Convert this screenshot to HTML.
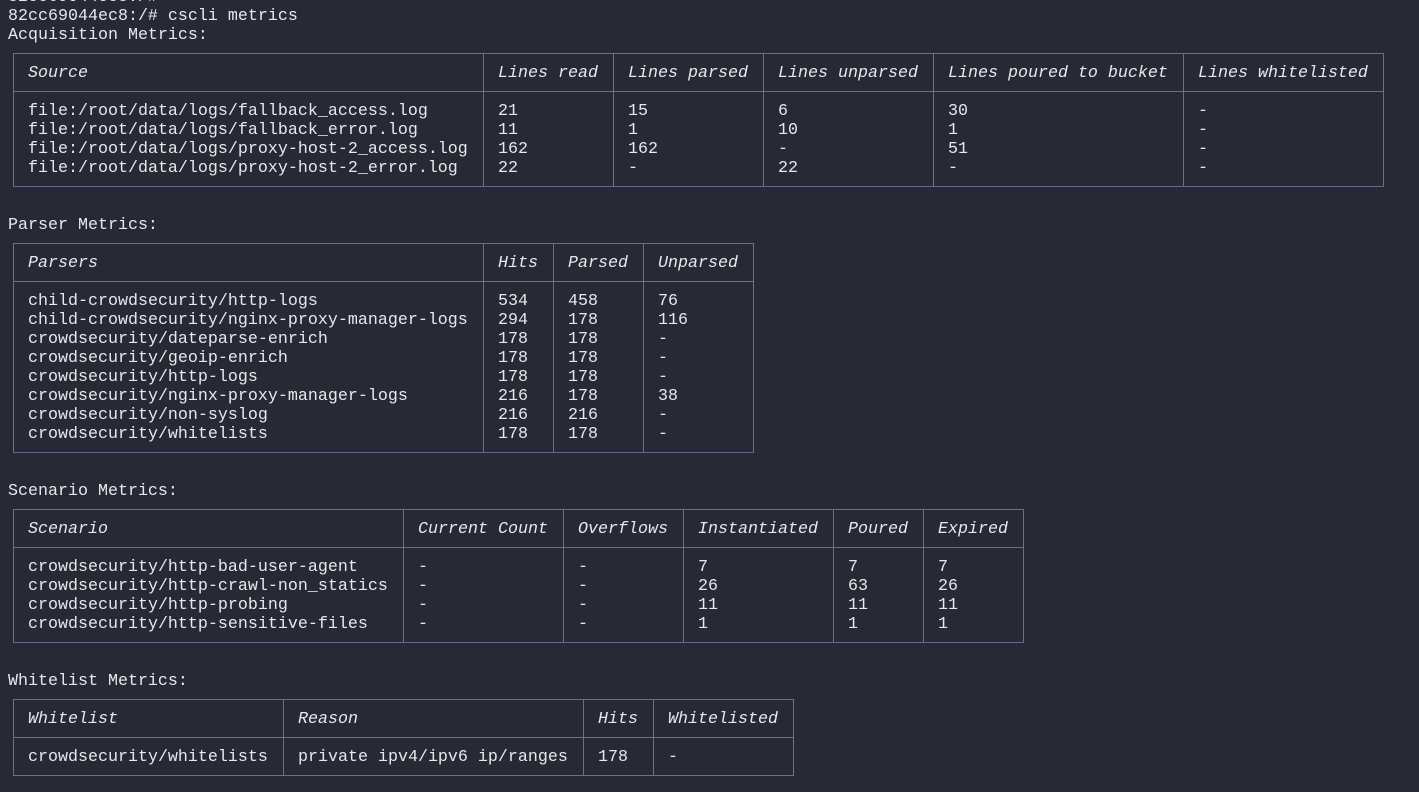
<!DOCTYPE html>
<html><head><meta charset="utf-8"><style>
html,body{margin:0;padding:0;background:#272935;width:1419px;height:792px;overflow:hidden;position:relative}
body{font-family:"Liberation Mono","DejaVu Sans Mono",monospace;font-size:16.67px;color:#e8e8ea}
.r{position:absolute;left:0;height:19px;line-height:19px;white-space:pre;width:1419px;margin-top:1px}
.r span{position:absolute;top:0}
.i{font-style:italic}
.h{position:absolute;height:1px;background:#6e7184}
.b{background:#5a67a0}
.v{position:absolute;width:1px;background:#6e7184}
</style></head><body>
<div class="r" style="top:-13.5px"><span style="left:8px">82cc69044ec8:/#</span></div>
<div class="r" style="top:5.5px"><span style="left:8px">82cc69044ec8:/# cscli metrics</span></div>
<div class="r" style="top:24.5px"><span style="left:8px">Acquisition Metrics:</span></div>

<div class="h" style="left:13px;top:53px;width:1370px"></div>
<div class="h" style="left:13px;top:91px;width:1370px"></div>
<div class="h b" style="left:13px;top:186px;width:1371px"></div>
<div class="v" style="left:13px;top:53px;height:133px"></div>
<div class="v" style="left:483px;top:53px;height:133px"></div>
<div class="v" style="left:613px;top:53px;height:133px"></div>
<div class="v" style="left:763px;top:53px;height:133px"></div>
<div class="v" style="left:933px;top:53px;height:133px"></div>
<div class="v" style="left:1183px;top:53px;height:133px"></div>
<div class="v" style="left:1383px;top:53px;height:133px"></div>
<div class="r i" style="top:62.5px"><span style="left:28px">Source</span><span style="left:498px">Lines read</span><span style="left:628px">Lines parsed</span><span style="left:778px">Lines unparsed</span><span style="left:948px">Lines poured to bucket</span><span style="left:1198px">Lines whitelisted</span></div>
<div class="r" style="top:100.5px"><span style="left:28px">file:/root/data/logs/fallback_access.log</span><span style="left:498px">21</span><span style="left:628px">15</span><span style="left:778px">6</span><span style="left:948px">30</span><span style="left:1198px">-</span></div>
<div class="r" style="top:119.5px"><span style="left:28px">file:/root/data/logs/fallback_error.log</span><span style="left:498px">11</span><span style="left:628px">1</span><span style="left:778px">10</span><span style="left:948px">1</span><span style="left:1198px">-</span></div>
<div class="r" style="top:138.5px"><span style="left:28px">file:/root/data/logs/proxy-host-2_access.log</span><span style="left:498px">162</span><span style="left:628px">162</span><span style="left:778px">-</span><span style="left:948px">51</span><span style="left:1198px">-</span></div>
<div class="r" style="top:157.5px"><span style="left:28px">file:/root/data/logs/proxy-host-2_error.log</span><span style="left:498px">22</span><span style="left:628px">-</span><span style="left:778px">22</span><span style="left:948px">-</span><span style="left:1198px">-</span></div>

<div class="r" style="top:214.5px"><span style="left:8px">Parser Metrics:</span></div>
<div class="h" style="left:13px;top:243px;width:740px"></div>
<div class="h" style="left:13px;top:281px;width:740px"></div>
<div class="h b" style="left:13px;top:452px;width:741px"></div>
<div class="v" style="left:13px;top:243px;height:209px"></div>
<div class="v" style="left:483px;top:243px;height:209px"></div>
<div class="v" style="left:553px;top:243px;height:209px"></div>
<div class="v" style="left:643px;top:243px;height:209px"></div>
<div class="v" style="left:753px;top:243px;height:209px"></div>
<div class="r i" style="top:252.5px"><span style="left:28px">Parsers</span><span style="left:498px">Hits</span><span style="left:568px">Parsed</span><span style="left:658px">Unparsed</span></div>
<div class="r" style="top:290.5px"><span style="left:28px">child-crowdsecurity/http-logs</span><span style="left:498px">534</span><span style="left:568px">458</span><span style="left:658px">76</span></div>
<div class="r" style="top:309.5px"><span style="left:28px">child-crowdsecurity/nginx-proxy-manager-logs</span><span style="left:498px">294</span><span style="left:568px">178</span><span style="left:658px">116</span></div>
<div class="r" style="top:328.5px"><span style="left:28px">crowdsecurity/dateparse-enrich</span><span style="left:498px">178</span><span style="left:568px">178</span><span style="left:658px">-</span></div>
<div class="r" style="top:347.5px"><span style="left:28px">crowdsecurity/geoip-enrich</span><span style="left:498px">178</span><span style="left:568px">178</span><span style="left:658px">-</span></div>
<div class="r" style="top:366.5px"><span style="left:28px">crowdsecurity/http-logs</span><span style="left:498px">178</span><span style="left:568px">178</span><span style="left:658px">-</span></div>
<div class="r" style="top:385.5px"><span style="left:28px">crowdsecurity/nginx-proxy-manager-logs</span><span style="left:498px">216</span><span style="left:568px">178</span><span style="left:658px">38</span></div>
<div class="r" style="top:404.5px"><span style="left:28px">crowdsecurity/non-syslog</span><span style="left:498px">216</span><span style="left:568px">216</span><span style="left:658px">-</span></div>
<div class="r" style="top:423.5px"><span style="left:28px">crowdsecurity/whitelists</span><span style="left:498px">178</span><span style="left:568px">178</span><span style="left:658px">-</span></div>

<div class="r" style="top:480.5px"><span style="left:8px">Scenario Metrics:</span></div>
<div class="h" style="left:13px;top:509px;width:1010px"></div>
<div class="h" style="left:13px;top:547px;width:1010px"></div>
<div class="h b" style="left:13px;top:642px;width:1011px"></div>
<div class="v" style="left:13px;top:509px;height:133px"></div>
<div class="v" style="left:403px;top:509px;height:133px"></div>
<div class="v" style="left:563px;top:509px;height:133px"></div>
<div class="v" style="left:683px;top:509px;height:133px"></div>
<div class="v" style="left:833px;top:509px;height:133px"></div>
<div class="v" style="left:923px;top:509px;height:133px"></div>
<div class="v" style="left:1023px;top:509px;height:133px"></div>
<div class="r i" style="top:518.5px"><span style="left:28px">Scenario</span><span style="left:418px">Current Count</span><span style="left:578px">Overflows</span><span style="left:698px">Instantiated</span><span style="left:848px">Poured</span><span style="left:938px">Expired</span></div>
<div class="r" style="top:556.5px"><span style="left:28px">crowdsecurity/http-bad-user-agent</span><span style="left:418px">-</span><span style="left:578px">-</span><span style="left:698px">7</span><span style="left:848px">7</span><span style="left:938px">7</span></div>
<div class="r" style="top:575.5px"><span style="left:28px">crowdsecurity/http-crawl-non_statics</span><span style="left:418px">-</span><span style="left:578px">-</span><span style="left:698px">26</span><span style="left:848px">63</span><span style="left:938px">26</span></div>
<div class="r" style="top:594.5px"><span style="left:28px">crowdsecurity/http-probing</span><span style="left:418px">-</span><span style="left:578px">-</span><span style="left:698px">11</span><span style="left:848px">11</span><span style="left:938px">11</span></div>
<div class="r" style="top:613.5px"><span style="left:28px">crowdsecurity/http-sensitive-files</span><span style="left:418px">-</span><span style="left:578px">-</span><span style="left:698px">1</span><span style="left:848px">1</span><span style="left:938px">1</span></div>

<div class="r" style="top:670.5px"><span style="left:8px">Whitelist Metrics:</span></div>
<div class="h" style="left:13px;top:699px;width:780px"></div>
<div class="h" style="left:13px;top:737px;width:780px"></div>
<div class="h" style="left:13px;top:775px;width:781px"></div>
<div class="v" style="left:13px;top:699px;height:76px"></div>
<div class="v" style="left:283px;top:699px;height:76px"></div>
<div class="v" style="left:583px;top:699px;height:76px"></div>
<div class="v" style="left:653px;top:699px;height:76px"></div>
<div class="v" style="left:793px;top:699px;height:76px"></div>
<div class="r i" style="top:708.5px"><span style="left:28px">Whitelist</span><span style="left:298px">Reason</span><span style="left:598px">Hits</span><span style="left:668px">Whitelisted</span></div>
<div class="r" style="top:746.5px"><span style="left:28px">crowdsecurity/whitelists</span><span style="left:298px">private ipv4/ipv6 ip/ranges</span><span style="left:598px">178</span><span style="left:668px">-</span></div>
</body></html>
